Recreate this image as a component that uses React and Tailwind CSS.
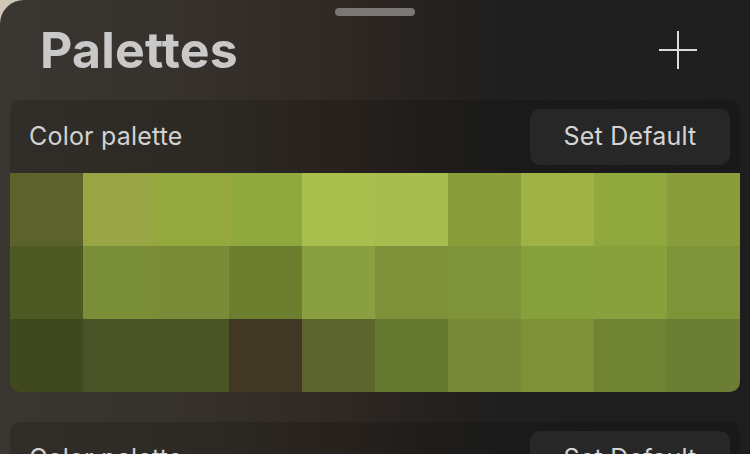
import React from "react";

const rows = [
  ["#5b622b", "#97a544", "#95a83e", "#8fa93e", "#a8bf4d", "#a9bc4f", "#899e3b", "#a0b145", "#90a83e", "#899c3b"],
  ["#4e5a23", "#7a8d37", "#7a8c37", "#6d7f2f", "#8a9f40", "#7f9239", "#7f9339", "#86a03b", "#89a13d", "#7f9339"],
  ["#40491d", "#485426", "#495525", "#403825", "#5c652e", "#66772f", "#788a38", "#7e9139", "#6f8332", "#6c7d34"],
];

function CardHeader() {
  return (
    <div className="flex h-[73px] items-center justify-between pl-[19px] pr-[10px]">
      <span className="text-[25px] tracking-[0.2px] text-[#d2d2d2]">Color palette</span>
      <button className="flex h-[56px] w-[200px] items-center justify-center rounded-[10px] bg-[#272727] text-[25px] tracking-[0.2px] text-[#d4d4d4]">
        Set Default
      </button>
    </div>
  );
}

export default function App() {
  return (
    <div className="h-[454px] w-[750px] overflow-hidden bg-[#cfc6b6]" style={{ fontFamily: "Inter, 'Noto Sans', sans-serif" }}>
      <div className="relative h-full w-full rounded-tl-[24px] bg-[linear-gradient(90deg,#3a3631_0%,#36312c_25%,#2f2823_45%,#26221f_57%,#1f1f1f_68%,#1e1e1e_100%)]">
        <div className="flex h-4 justify-center pt-2">
          <div className="h-2 w-20 rounded-full bg-[#7a7875]" />
        </div>
        <div className="flex h-[68px] items-center justify-between pl-[40px] pr-[53px]">
          <h1 className="text-[50px] font-bold leading-none tracking-[0.2px] text-[#c9c9c9]">Palettes</h1>
          <svg width="38" height="38" viewBox="0 0 38 38" className="text-[#dadada]">
            <path d="M19 0V38M0 19H38" stroke="currentColor" strokeWidth="2" />
          </svg>
        </div>
        <div className="mt-4 flex flex-col gap-[30px] px-[10px]">
          <div className="overflow-hidden rounded-[10px] bg-black/15">
            <CardHeader />
            <div className="grid grid-cols-10 overflow-hidden rounded-b-[8px]">
              {rows.flat().map((c, i) => (
                <div key={i} className="h-[73px]" style={{ backgroundColor: c }} />
              ))}
            </div>
          </div>
          <div className="overflow-hidden rounded-[10px] bg-black/15">
            <CardHeader />
          </div>
        </div>
      </div>
    </div>
  );
}
